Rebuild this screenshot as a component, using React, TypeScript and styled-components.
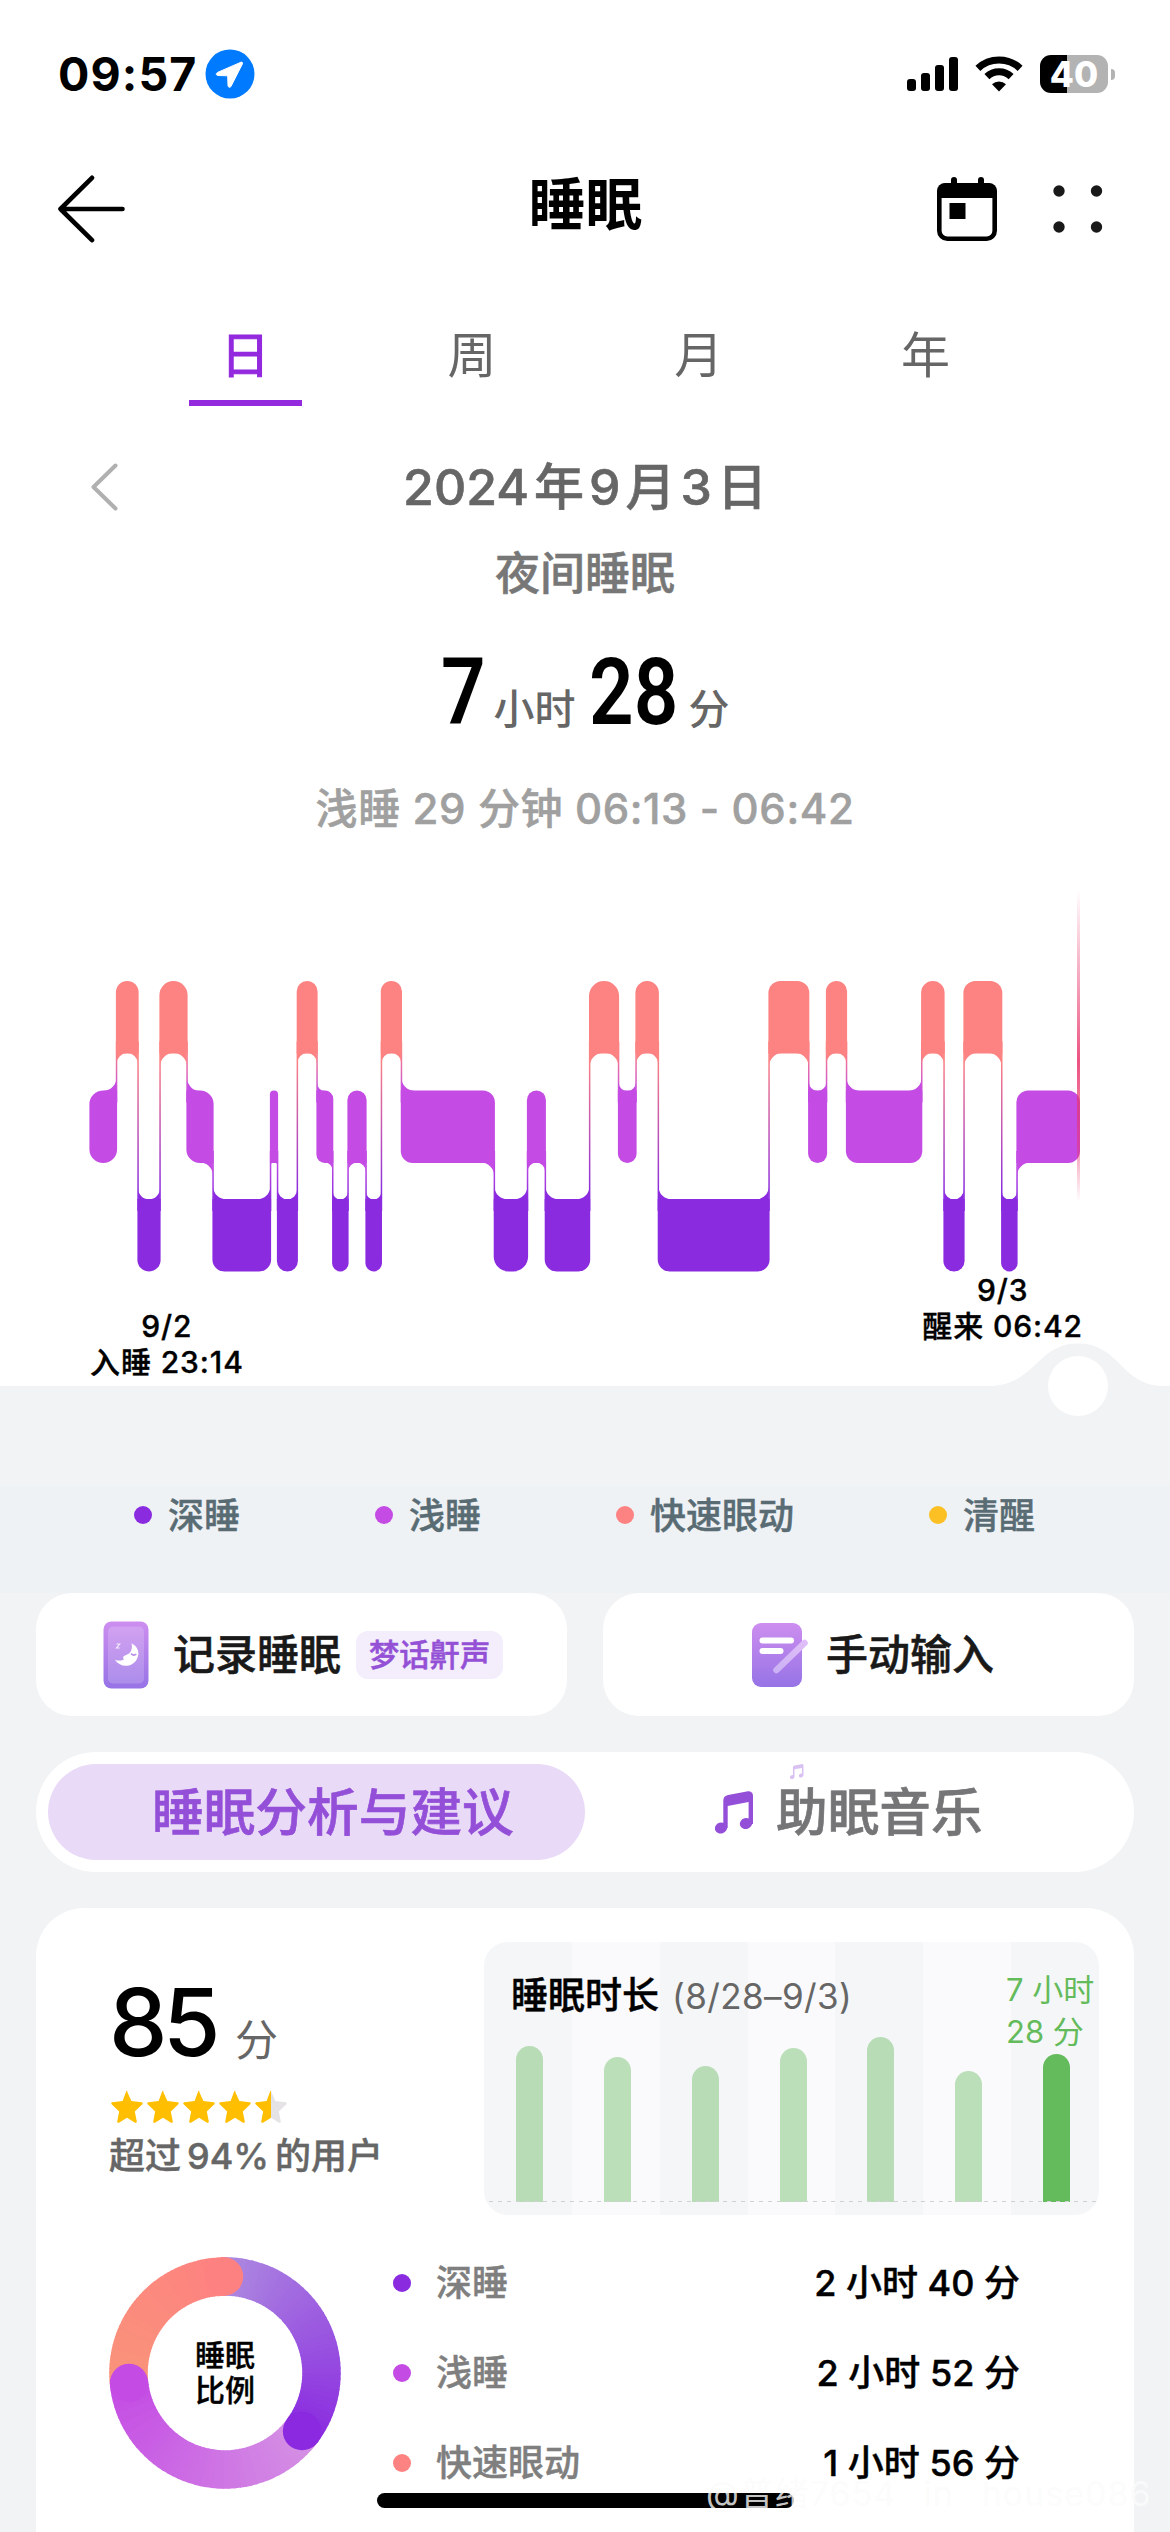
import React from "react";
import styled, { createGlobalStyle, css } from "styled-components";

const GlobalStyle = createGlobalStyle`
  * { box-sizing: border-box; }
  body {
    margin: 0;
    background: #fff;
    font-family: Inter, "Noto Sans CJK SC", sans-serif;
    color: #000;
  }
  svg { display: block; flex: none; }
`;

/* medium weight that also thickens the CJK glyphs */
const medium = css`
  font-weight: 500;
  -webkit-text-stroke: 0.012em currentColor;
`;

const DEEP = "#8a2be0";
const LIGHT = "#c44be4";
const REM = "#fd8282";
const AWAKE = "#fcc024";

/* ---------- layout ---------- */

const Screen = styled.main`
  position: relative;
  width: 1170px;
  height: 2532px;
  overflow: hidden;
  display: flex;
  flex-direction: column;
  background: #f1f3f5;
  white-space: nowrap;
`;

const TopPanel = styled.section`
  position: relative;
  flex: none;
  height: 1386px;
  background: #fff;
  display: flex;
  flex-direction: column;
`;

const StatusBar = styled.div`
  height: 148px;
  padding: 0 55px 0 58px;
  display: flex;
  align-items: center;
  justify-content: space-between;
`;

const StatusGroup = styled.div<{ $gap: number }>`
  display: flex;
  align-items: center;
  gap: ${(p) => p.$gap}px;
`;

const Clock = styled.span`
  width: 138px;
  font-size: 46.5px;
  font-weight: 700;
  line-height: 56px;
  letter-spacing: 1.1px;
`;

const Battery = styled.div`
  width: 68px;
  height: 38px;
  border-radius: 11px;
  background: linear-gradient(90deg, #000 27px, #b3b3b3 27px);
  color: #fff;
  font-size: 35px;
  font-weight: 800;
  line-height: 38px;
  text-align: center;
`;

const BatteryNub = styled.div`
  width: 4px;
  height: 11px;
  margin-left: 3px;
  border-radius: 0 5px 5px 0;
  background: #b3b3b3;
`;

const Header = styled.header`
  height: 122px;
  padding: 0 66px 0 57px;
  display: grid;
  grid-template-columns: 1fr auto 1fr;
  align-items: center;
`;

const Title = styled.h1`
  margin: 0 -10px 0 0;
  font-size: 57px;
  line-height: 64px;
  font-weight: 700;
  padding-bottom: 8px;
`;

const Actions = styled.div`
  display: flex;
  justify-content: flex-end;
  align-items: center;
  gap: 56px;
`;

const Tabs = styled.nav`
  height: 136px;
  padding: 55px 131px 0 132px;
  display: grid;
  grid-template-columns: repeat(4, 1fr);
`;

const Tab = styled.div<{ $active?: boolean }>`
  display: flex;
  flex-direction: column;
  align-items: center;
  gap: 14px;
  padding-top: 1px;
  font-size: 49px;
  line-height: 60px;
  font-weight: 400;
  -webkit-text-stroke: ${(p) => (p.$active ? "1.1px" : "0")} currentColor;
  color: ${(p) => (p.$active ? "#932ade" : "#666")};
  &::after {
    content: "";
    width: 113px;
    height: 6px;
    background: ${(p) => (p.$active ? "#932ade" : "transparent")};
  }
`;

const DateRow = styled.div`
  height: 137px;
  padding: 51px 90px 26px;
  display: grid;
  grid-template-columns: 1fr auto 1fr;
  align-items: center;
`;

const DateText = styled.div`
  ${medium}
  display: flex;
  gap: 5px;
  font-size: 50px;
  line-height: 60px;
  color: #666;
`;

const Period = styled.div`
  ${medium}
  height: 60px;
  padding-top: 1px;
  font-size: 45px;
  line-height: 60px;
  color: #777;
  text-align: center;
`;

const Duration = styled.div`
  height: 165px;
  padding-top: 30px;
  display: flex;
  justify-content: center;
  align-items: baseline;
`;

const BigNumber = styled.span<{ $width: number }>`
  width: ${(p) => p.$width}px;
  font-family: Roboto, sans-serif;
  font-size: 93px;
  line-height: 120px;
  font-weight: 600;
  transform: scaleX(0.84);
  transform-origin: left;
`;

const BigUnit = styled.span<{ $width: number }>`
  width: ${(p) => p.$width}px;
  font-size: 41px;
  font-weight: 500;
  color: #666;
`;

const StageLine = styled.div`
  ${medium}
  height: 80px;
  padding-top: 1px;
  font-size: 42px;
  line-height: 80px;
  letter-spacing: 0.6px;
  color: #a0a0a0;
  text-align: center;
`;

const ChartBox = styled.div`
  height: 392px;
  margin-top: 32px;
`;

const TimeLabels = styled.div`
  display: flex;
  justify-content: space-between;
  padding: 0 87px 0 90px;
`;

const TimeLabel = styled.div<{ $drop: number }>`
  ${medium}
  padding-top: ${(p) => p.$drop}px;
  font-size: 30px;
  line-height: 36px;
  letter-spacing: 0.9px;
  text-align: center;
`;

const SliderHandle = styled.div`
  position: absolute;
  left: 980px;
  bottom: -32px;
`;

const Legend = styled.div`
  flex: none;
  height: 107px;
  margin-top: 100px;
  padding: 0 135px 49px 134px;
  display: flex;
  align-items: center;
  justify-content: space-between;
  background: #eef2f5;
`;

const LegendItem = styled.div`
  ${medium}
  display: flex;
  align-items: center;
  gap: 16px;
  font-size: 36px;
  line-height: 48px;
  color: #596c74;
`;

const Dot = styled.i<{ $color: string }>`
  flex: none;
  width: 18px;
  height: 18px;
  border-radius: 50%;
  background: ${(p) => p.$color};
`;

const LegendName = styled.span`
  padding-top: 1px;
`;

const EntryRow = styled.div`
  flex: none;
  height: 123px;
  padding: 0 36px;
  display: grid;
  grid-template-columns: 1fr 1fr;
  gap: 36px;
`;

const EntryCard = styled.div<{ $indent: number }>`
  ${medium}
  padding-left: ${(p) => p.$indent}px;
  border-radius: 36px;
  background: #fff;
  display: flex;
  align-items: center;
  font-size: 42px;
  line-height: 60px;
  color: #191919;
`;

const EntryText = styled.span<{ $gap: number }>`
  margin-left: ${(p) => p.$gap}px;
`;

const Badge = styled.span`
  margin-left: 15px;
  padding: 0 13px;
  border-radius: 12px;
  background: #f3edfc;
  color: #9451d6;
  font-size: 30.3px;
  line-height: 48px;
`;

const Segmented = styled.div`
  ${medium}
  flex: none;
  height: 120px;
  margin: 36px 36px 0;
  padding: 12px;
  border-radius: 60px;
  background: #fff;
  display: grid;
  grid-template-columns: 1fr 1fr;
  font-size: 51.7px;
  line-height: 96px;
`;

const SegmentActive = styled.div`
  padding-left: 104px;
  border-radius: 48px;
  background: #e9daf7;
  color: #944fd8;
`;

const Segment = styled.div`
  position: relative;
  padding-left: 130px;
  display: flex;
  align-items: center;
  gap: 23px;
  color: #757577;
`;

const TinyNote = styled.div`
  position: absolute;
  left: 205px;
  top: 0;
`;

const ScoreCard = styled.section`
  flex: none;
  height: 720px;
  margin: 36px 36px 0;
  padding: 34px 35px 0 73px;
  border-radius: 48px;
  background: #fff;
  display: flex;
  flex-direction: column;
`;

const ScoreTop = styled.div`
  height: 273px;
  display: flex;
  justify-content: space-between;
`;

const Score = styled.div`
  padding-top: 20px;
  display: flex;
  flex-direction: column;
`;

const ScoreValue = styled.div`
  height: 120px;
  display: flex;
  align-items: baseline;
  gap: 19px;
  font-size: 93px;
  line-height: 120px;
  font-weight: 500;
  letter-spacing: -4.5px;
`;

const ScoreUnit = styled.span`
  font-size: 43px;
  font-weight: 400;
  color: #666;
`;

const Stars = styled.div`
  display: flex;
  height: 49px;
  padding: 8px 0 0 1px;
  gap: 2px;
`;

const Beaten = styled.div`
  ${medium}
  display: flex;
  gap: 6px;
  font-size: 36px;
  line-height: 50px;
  color: #666;
`;

const WeekChart = styled.div`
  position: relative;
  width: 615px;
  height: 273px;
  border-radius: 24px;
  overflow: hidden;
  display: grid;
  grid-template-columns: repeat(7, 1fr);
`;

const DayColumn = styled.div<{ $alt: boolean }>`
  padding: 0 0 13px 32px;
  display: flex;
  align-items: flex-end;
  background: ${(p) => (p.$alt ? "#fafafc" : "#f4f6f8")};
`;

const DayBar = styled.div<{ $today: boolean }>`
  width: 27px;
  border-radius: 13.5px 13.5px 0 0;
  background: ${(p) => (p.$today ? "#63bb5b" : "rgba(99, 187, 91, 0.42)")};
`;

const BaseLine = styled.div`
  position: absolute;
  left: 0;
  right: 0;
  bottom: 13px;
  height: 1px;
  background: repeating-linear-gradient(90deg, transparent 0 5px, #cfd1d3 5px 9px);
`;

const WeekTitle = styled.div`
  ${medium}
  position: absolute;
  left: 27px;
  top: 30px;
  display: flex;
  align-items: baseline;
  gap: 13px;
  font-size: 37px;
  line-height: 48px;
`;

const WeekRange = styled.span`
  font-size: 35px;
  font-weight: 400;
  letter-spacing: 0.4px;
  -webkit-text-stroke: 0;
  color: #666;
`;

const TodayValue = styled.div`
  position: absolute;
  left: 522px;
  top: 27px;
  font-size: 31px;
  line-height: 42px;
  color: #63bb5b;
`;

const Breakdown = styled.div`
  display: flex;
  padding-top: 23px;
`;

const DonutBox = styled.div`
  display: grid;
  width: 232px;
  height: 232px;
  margin-top: 19px;
  place-items: center;
  & > * { grid-area: 1 / 1; }
`;

const DonutLabel = styled.div`
  ${medium}
  font-size: 30px;
  line-height: 35px;
  text-align: center;
`;

const StageList = styled.div`
  width: 627px;
  margin-left: 52px;
`;

const StageRow = styled.div`
  ${medium}
  height: 90px;
  display: flex;
  align-items: center;
  font-size: 36px;
  line-height: 40px;
`;

const StageName = styled.span`
  margin-left: 25px;
  flex: 1;
  color: #7f7f7f;
`;

const HomeIndicator = styled.div`
  position: absolute;
  left: 377px;
  top: 2493px;
  width: 417px;
  height: 15px;
  border-radius: 8px;
  background: #000;
`;

const Watermark = styled.div`
  position: absolute;
  left: 706px;
  top: 2476px;
  font-size: 34px;
  line-height: 36px;
  letter-spacing: 1px;
  word-spacing: 17px;
  color: rgba(252, 252, 252, 0.8);
`;

/* ---------- icons ---------- */

const LocationIcon = () => (
  <svg width="50" height="50" viewBox="0 0 50 50">
    <circle cx="25" cy="25" r="24.5" fill="#007aff" />
    <path
      d="M36 13.2 12.6 23.4c-2 .9-1.6 3 .5 3.1l9.6.3.3 9.7c.1 2 2.300 2.500 3.200.5L37.400 14.900c.5-1.200-.3-2.100-1.400-1.700z"
      fill="#fff"
      stroke="#fff"
      strokeWidth="1"
      strokeLinejoin="round"
    />
  </svg>
);

const SignalIcon = () => (
  <svg width="51" height="34" viewBox="0 0 51 34">
    {[12, 18, 26, 34].map((h, i) => (
      <rect key={h} x={i * 14} y={34 - h} width="9" height={h} rx="3" />
    ))}
  </svg>
);

const WifiIcon = () => (
  <svg width="48" height="36" viewBox="0 0 48 36">
    <path d="M24 35.500 17 28.300a10.200 10.200 0 0 1 14 0z" />
    <path d="M11.900 20.600a17.500 17.500 0 0 1 24.200 0" fill="none" stroke="#000" strokeWidth="7.200" />
    <path d="M2.900 12.300a31 31 0 0 1 42.200 0" fill="none" stroke="#000" strokeWidth="7.200" />
  </svg>
);

const BackIcon = () => (
  <svg width="68" height="68" viewBox="0 0 68 68" fill="none" stroke="#000" strokeWidth="4.600" strokeLinecap="round" strokeLinejoin="round">
    <path d="M35 2.800 3.500 34 35 65.200M4 34h61.500" />
  </svg>
);

const CalendarIcon = () => (
  <svg width="60" height="66" viewBox="0 0 60 66">
    <rect x="14" y="1" width="6" height="12" rx="3" />
    <rect x="41" y="1" width="6" height="12" rx="3" />
    <rect x="2.300" y="9.300" width="55.400" height="53.400" rx="8" fill="none" stroke="#000" strokeWidth="4.600" />
    <path d="M0 22V15a8 8 0 0 1 8-8h44a8 8 0 0 1 8 8v7z" />
    <rect x="12.500" y="27" width="16" height="16" />
  </svg>
);

const MoreIcon = () => (
  <svg width="51" height="50" viewBox="0 0 51 50" fill="#191919">
    {[6, 43.500].map((x) => [7, 43].map((y) => <circle key={`${x}-${y}`} cx={x} cy={y} r="5.700" />))}
  </svg>
);

const PrevIcon = () => (
  <svg width="30" height="50" viewBox="0 0 30 50" fill="none" stroke="#b0b0b0" strokeWidth="4" strokeLinecap="round" strokeLinejoin="round">
    <path d="M25.500 3.500 3.500 25l22 21.500" />
  </svg>
);

const PhoneIcon = () => (
  <svg width="46" height="68" viewBox="0 0 46 68">
    <defs>
      <linearGradient id="phone" x1="0" y1="0" x2="0" y2="1">
        <stop offset="0" stopColor="#cd8eef" />
        <stop offset="1" stopColor="#9673e6" />
      </linearGradient>
    </defs>
    <rect x="0.500" y="0.500" width="45" height="67" rx="8" fill="url(#phone)" />
    <rect x="5" y="5.500" width="36" height="57" rx="5" fill="#fff" fillOpacity="0.180" />
    <path d="M28.500 22.200c6.500 3.400 8.900 9.800 5.200 16.200-4.700 8.100-16.300 8.600-21.800.3 3.400 1.300 7 1.200 9.300-.5-1.300-.6-1.500-1.800-.5-3 1.500-1.500 4.300-1.600 5.900-3.300 2.300-2.500 2.900-5.900 1.900-9.700z" fill="#fff" />
    <path d="M28 32.500c1.600 1.900 3.600 2 5.300.7" fill="none" stroke="#b98bea" strokeWidth="1.500" />
    <path d="M13.500 23h3.200l-3.200 4h3.200" fill="none" stroke="#fff" strokeOpacity="0.800" strokeWidth="1.200" />
  </svg>
);

const NoteIcon = () => (
  <svg width="57" height="64" viewBox="0 0 57 64">
    <defs>
      <linearGradient id="note" x1="0" y1="0" x2="0" y2="1">
        <stop offset="0" stopColor="#cd8eef" />
        <stop offset="1" stopColor="#9673e6" />
      </linearGradient>
      <linearGradient id="pen" x1="1" y1="0" x2="0" y2="1">
        <stop offset="0" stopColor="#e0bdf8" />
        <stop offset="1" stopColor="#cbb2f4" />
      </linearGradient>
    </defs>
    <rect width="50" height="64" rx="9" fill="url(#note)" />
    <path d="M10.500 17.500h28.500M10.500 28h18" stroke="#fff" strokeWidth="6" strokeLinecap="round" />
    <path d="M24.500 47 52.500 20" stroke="url(#pen)" strokeWidth="6.500" strokeLinecap="round" />
  </svg>
);

const MusicIcon = ({ width, color }: { width: number; color: string }) => (
  <svg width={width} height={(width * 43) / 38} viewBox="0 0 38 43" fill={color}>
    <ellipse cx="6" cy="37" rx="6.200" ry="5.500" transform="rotate(-18 6 37)" />
    <ellipse cx="31" cy="32.500" rx="6.200" ry="5.500" transform="rotate(-18 31 32.500)" />
    <path d="M8.300 36V9.500c0-3.300 1.800-5 4.800-5.600L31.700.4C35.500-.3 38 1.300 38 4.800V33h-4.400V11L12.700 15v22z" />
  </svg>
);

const STAR = "M16 1.500 20.300 10.700 30.300 12c1 .2 1.300 1.200.6 1.900l-7.300 7 1.900 9.600c.2 1-.8 1.700-1.700 1.200L16 27l-7.800 4.700c-.9.5-1.900-.2-1.700-1.200l1.900-9.600-7.300-7c-.7-.7-.4-1.700.6-1.900l10-1.300 3.500-9.200c.3-.9 1.300-.9 1.600 0z";

const StarIcon = ({ half }: { half?: boolean }) => (
  <svg width="34" height="34" viewBox="-0.5 0 33 33">
    <defs>
      <linearGradient id="halfStar">
        <stop offset="0.500" stopColor="#ffbf00" />
        <stop offset="0.500" stopColor="#e5e3e5" />
      </linearGradient>
    </defs>
    <path d={STAR} fill={half ? "url(#halfStar)" : "#ffbf00"} />
  </svg>
);

/* ---------- sleep stage chart ---------- */

type Stage = "R" | "L" | "D";
const LEVEL: Record<Stage, { y: number; color: string; rank: number }> = {
  R: { y: 101, color: REM, rank: 0 },
  L: { y: 210.500, color: LIGHT, rank: 1 },
  D: { y: 319, color: DEEP, rank: 2 },
};
const BAR_H = 72.500;
const NIGHT: [Stage, number][] = [
  ["L", 90], ["R", 116.500], ["D", 138], ["R", 160], ["L", 187], ["D", 213], ["L", 270.500],
  ["D", 277.500], ["R", 297.300], ["L", 317], ["D", 332.700], ["L", 348], ["D", 366], ["R", 381.400],
  ["L", 401.400], ["D", 494.300], ["L", 527.500], ["D", 545.300], ["R", 589.600], ["L", 618.500],
  ["R", 636], ["D", 658.300], ["R", 769], ["L", 808.700], ["R", 826.500], ["L", 846.500],
  ["R", 921.700], ["D", 944], ["R", 964], ["D", 1001.700], ["L", 1017],
];
const NIGHT_END = 1080;

const arc = (r: number, dx: number, dy: number, sweep: 0 | 1) => `a${r} ${r} 0 0 ${sweep} ${dx} ${dy}`;

const SleepChart = () => {
  const bars = NIGHT.map(([stage, x], i) => {
    const last = i === NIGHT.length - 1;
    const x0 = x - 0.600;
    const x1 = last ? NIGHT_END : NIGHT[i + 1][1] + 0.600;
    const w = x1 - x0;
    const r = w < 34.500 ? Math.min(w / 2, 15) : 12;
    const { y, color, rank } = LEVEL[stage];
    const yb = y + BAR_H;
    const left = i > 0 ? LEVEL[NIGHT[i - 1][0]].rank - rank : 0;
    const right = last ? 0 : LEVEL[NIGHT[i + 1][0]].rank - rank;
    const tl = left < 0 ? 0 : r;
    const bl = left > 0 ? 0 : r;
    const tr = right < 0 ? 0 : r;
    const br = right > 0 ? 0 : r;
    let d =
      `M${x0 + tl} ${y}H${x1 - tr}${arc(tr, tr, tr, 1)}V${yb - br}${arc(br, -br, br, 1)}` +
      `H${x0 + bl}${arc(bl, -bl, -bl, 1)}V${y + tl}${arc(tl, tl, -tl, 1)}z`;
    const f = Math.min(13, w / 2 - 0.800);
    /* concave fillet: down or up the shared edge, then back to the bar along a quarter circle */
    const fillet = (atLeft: boolean, dir: 1 | -1) => {
      const sx = atLeft ? x0 + 0.800 : x1 - 0.800;
      const sy = dir === 1 ? yb - 0.400 : y + 0.400;
      const sweep = atLeft === (dir === 1) ? 1 : 0;
      return `M${sx} ${sy}v${dir * f}${arc(f, atLeft ? f : -f, -dir * f, sweep)}z`;
    };
    const fillets = [
      left !== 0 ? fillet(true, left > 0 ? 1 : -1) : "",
      right !== 0 ? fillet(false, right > 0 ? 1 : -1) : "",
    ].join("");
    return (
      <g key={i} fill={color}>
        <path d={d} />
        <path d={fillets} />
      </g>
    );
  });
  const links = NIGHT.slice(1).map(([stage, x], i) => {
    const a = NIGHT[i][0];
    const [up, down] = LEVEL[a].rank < LEVEL[stage].rank ? [a, stage] : [stage, a];
    const y0 = LEVEL[up].y + BAR_H - 12;
    return <rect key={i} x={x - 0.700} y={y0} width="1.500" height={LEVEL[down].y + 12 - y0} fill={`url(#link${up}${down})`} />;
  });
  return (
    <svg width="1170" height="392" viewBox="0 0 1170 392">
      <defs>
        {["RL", "RD", "LD"].map((k) => (
          <linearGradient key={k} id={`link${k}`} x1="0" y1="0" x2="0" y2="1">
            <stop offset="0.100" stopColor={LEVEL[k[0] as Stage].color} />
            <stop offset="0.900" stopColor={LEVEL[k[1] as Stage].color} />
          </linearGradient>
        ))}
        <linearGradient id="cursor" x1="0" y1="0" x2="0" y2="1">
          <stop offset="0" stopColor="#e8356b" stopOpacity="0" />
          <stop offset="0.550" stopColor="#e8356b" stopOpacity="0.850" />
          <stop offset="0.820" stopColor="#e8356b" stopOpacity="0.500" />
          <stop offset="1" stopColor="#e8356b" stopOpacity="0" />
        </linearGradient>
      </defs>
      {links}
      {bars}
      <rect x="1077" y="10" width="3" height="312" fill="url(#cursor)" />
    </svg>
  );
};

const Handle = () => (
  <svg width="200" height="76" viewBox="0 0 200 76">
    <path d="M0 46v-2h8c48 0 48-42.500 90-42.500s43 42.500 86 42.500h16v2z" fill="#f1f3f5" />
    <circle cx="98" cy="44" r="30" fill="#fff" />
  </svg>
);

/* ---------- donut ---------- */

const mix = (a: number[], b: number[], t: number) =>
  `rgb(${a.map((v, i) => Math.round(v + (b[i] - v) * t)).join(",")})`;

const point = (deg: number) => {
  const rad = ((deg - 90) * Math.PI) / 180;
  return [116 + 96.500 * Math.cos(rad), 116 + 96.500 * Math.sin(rad)];
};

const RINGS = [
  { from: 264, to: 360, a: [249, 148, 122], b: [254, 129, 129] },
  { from: 126, to: 264, a: [213, 145, 228], b: [196, 75, 228] },
  { from: 0, to: 127, a: [172, 136, 224], b: [138, 41, 224] },
];

const Donut = () => (
  <svg width="232" height="232" viewBox="0 0 232 232">
    {RINGS.map(({ from, to, a, b }) => {
      const n = 48;
      const step = (to - from) / n;
      const [ex, ey] = point(to);
      return (
        <g key={from}>
          {Array.from({ length: n }, (_, i) => {
            const [x0, y0] = point(from + i * step);
            const [x1, y1] = point(from + (i + 1) * step + (i < n - 1 ? 0.600 : 0));
            return (
              <path key={i} d={`M${x0} ${y0}A96.500 96.500 0 0 1 ${x1} ${y1}`} stroke={mix(a, b, i / n)} strokeWidth="38.500" fill="none" />
            );
          })}
          <circle cx={ex} cy={ey} r="19.250" fill={mix(a, b, 1)} />
        </g>
      );
    })}
    <circle cx="115" cy="19.500" r="19.250" fill={mix(RINGS[0].a, RINGS[0].b, 1)} />
  </svg>
);

/* ---------- data ---------- */

const LEGEND = [
  { name: "深睡", color: DEEP },
  { name: "浅睡", color: LIGHT },
  { name: "快速眼动", color: REM },
  { name: "清醒", color: AWAKE },
];

const STAGES = [
  { name: "深睡", color: DEEP, value: "2 小时 40 分" },
  { name: "浅睡", color: LIGHT, value: "2 小时 52 分" },
  { name: "快速眼动", color: REM, value: "1 小时 56 分" },
];

const WEEK = [156, 145.500, 136, 154, 165.500, 131.500, 148.500];

export default function App() {
  return (
    <Screen>
      <GlobalStyle />
      <TopPanel>
        <StatusBar>
          <StatusGroup $gap={9}>
            <Clock>09:57</Clock>
            <LocationIcon />
          </StatusGroup>
          <StatusGroup $gap={17}>
            <SignalIcon />
            <WifiIcon />
            <StatusGroup $gap={0}>
              <Battery>40</Battery>
              <BatteryNub />
            </StatusGroup>
          </StatusGroup>
        </StatusBar>

        <Header>
          <BackIcon />
          <Title>睡眠</Title>
          <Actions>
            <CalendarIcon />
            <MoreIcon />
          </Actions>
        </Header>

        <Tabs>
          <Tab $active>日</Tab>
          <Tab>周</Tab>
          <Tab>月</Tab>
          <Tab>年</Tab>
        </Tabs>

        <DateRow>
          <PrevIcon />
          <DateText>
            <span>2024</span>
            <span>年</span>
            <span>9</span>
            <span>月</span>
            <span>3</span>
            <span>日</span>
          </DateText>
        </DateRow>
        <Period>夜间睡眠</Period>
        <Duration>
          <BigNumber $width={53}>7</BigNumber>
          <BigUnit $width={95}>小时</BigUnit>
          <BigNumber $width={100}>28</BigNumber>
          <BigUnit $width={41}>分</BigUnit>
        </Duration>
        <StageLine>浅睡 29 分钟 06:13 - 06:42</StageLine>

        <ChartBox>
          <SleepChart />
        </ChartBox>
        <TimeLabels>
          <TimeLabel $drop={36}>
            9/2
            <br />
            入睡 23:14
          </TimeLabel>
          <TimeLabel $drop={0}>
            9/3
            <br />
            醒来 06:42
          </TimeLabel>
        </TimeLabels>
        <SliderHandle>
          <Handle />
        </SliderHandle>
      </TopPanel>

      <Legend>
        {LEGEND.map((l) => (
          <LegendItem key={l.name}>
            <Dot $color={l.color} />
            <LegendName>{l.name}</LegendName>
          </LegendItem>
        ))}
      </Legend>

      <EntryRow>
        <EntryCard $indent={67}>
          <PhoneIcon />
          <EntryText $gap={24}>记录睡眠</EntryText>
          <Badge>梦话鼾声</Badge>
        </EntryCard>
        <EntryCard $indent={149}>
          <NoteIcon />
          <EntryText $gap={17}>手动输入</EntryText>
        </EntryCard>
      </EntryRow>

      <Segmented>
        <SegmentActive>睡眠分析与建议</SegmentActive>
        <Segment>
          <MusicIcon width={38} color="#944fd8" />
          助眠音乐
          <TinyNote>
            <MusicIcon width={13.5} color="#d9c2f1" />
          </TinyNote>
        </Segment>
      </Segmented>

      <ScoreCard>
        <ScoreTop>
          <Score>
            <ScoreValue>
              85<ScoreUnit>分</ScoreUnit>
            </ScoreValue>
            <Stars>
              <StarIcon />
              <StarIcon />
              <StarIcon />
              <StarIcon />
              <StarIcon half />
            </Stars>
            <Beaten>
              <span>超过</span>
              <span>94%</span>
              <span>的用户</span>
            </Beaten>
          </Score>
          <WeekChart>
            {WEEK.map((h, i) => (
              <DayColumn key={i} $alt={i % 2 === 1}>
                <DayBar $today={i === 6} style={{ height: h }} />
              </DayColumn>
            ))}
            <BaseLine />
            <WeekTitle>
              睡眠时长<WeekRange>(8/28–9/3)</WeekRange>
            </WeekTitle>
            <TodayValue>
              7 小时
              <br />
              28 分
            </TodayValue>
          </WeekChart>
        </ScoreTop>
        <Breakdown>
          <DonutBox>
            <Donut />
            <DonutLabel>
              睡眠
              <br />
              比例
            </DonutLabel>
          </DonutBox>
          <StageList>
            {STAGES.map((s) => (
              <StageRow key={s.name}>
                <Dot $color={s.color} />
                <StageName>{s.name}</StageName>
                <span>{s.value}</span>
              </StageRow>
            ))}
          </StageList>
        </Breakdown>
      </ScoreCard>

      <HomeIndicator />
      <Watermark>@普绪7654 in house086</Watermark>
    </Screen>
  );
}
